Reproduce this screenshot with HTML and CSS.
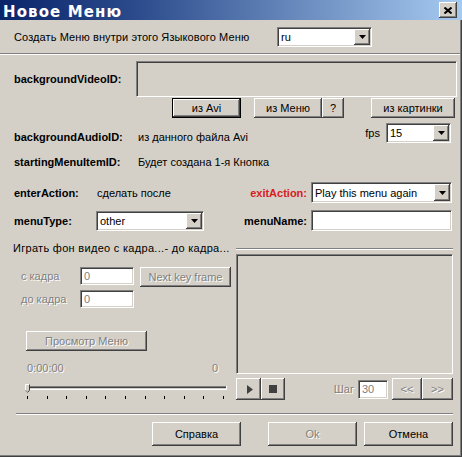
FILE: index.html
```html
<!DOCTYPE html>
<html lang="ru">
<head>
<meta charset="utf-8">
<title>Новое Меню</title>
<link rel="stylesheet" href="styles.css">
</head>
<body>
<div class="dialog">
  <div class="titlebar">
    <span class="title">Новое Меню</span>
    <div class="btn close"><svg width="8" height="7" viewBox="0 0 8 7"><path d="M0.5 0.5L7.5 6.5M7.5 0.5L0.5 6.5" stroke="#000" stroke-width="2" fill="none"/></svg></div>
  </div>

  <div class="row row-lang">
    <span class="lbl-lang">Создать Меню внутри этого Языкового Меню</span>
    <div class="field combo combo-lang"><span class="val">ru</span><span class="btn ddb"><svg width="7" height="4" viewBox="0 0 7 4"><path d="M0 0h7L3.5 4z" fill="#000"/></svg></span></div>
  </div>

  <div class="sep sep-full"></div>

  <div class="row row-video">
    <span class="b lbl-video">backgroundVideoID:</span>
    <div class="field ro video-box"></div>
  </div>

  <div class="row row-btns">
    <div class="btn default b-avi">из Avi</div>
    <div class="btn b-menu">из Меню</div>
    <div class="btn b-q">?</div>
    <div class="btn b-pic">из картинки</div>
  </div>

  <div class="row row-audio">
    <span class="b al lbl-w124">backgroundAudioID:</span>
    <span class="al">из данного файла Avi</span>
    <span class="spacer"></span>
    <span class="fps-lbl">fps</span>
    <div class="field combo combo-fps"><span class="val">15</span><span class="btn ddb"><svg width="7" height="4" viewBox="0 0 7 4"><path d="M0 0h7L3.5 4z" fill="#000"/></svg></span></div>
  </div>

  <div class="row row-start">
    <span class="b lbl-w124">startingMenuItemID:</span>
    <span>Будет создана 1-я Кнопка</span>
  </div>

  <div class="row row-enter">
    <span class="b lbl-enter">enterAction:</span>
    <span>сделать после</span>
    <span class="spacer"></span>
    <span class="b lbl-exit">exitAction:</span>
    <div class="field combo combo-exit"><span class="val">Play this menu again</span><span class="btn ddb"><svg width="7" height="4" viewBox="0 0 7 4"><path d="M0 0h7L3.5 4z" fill="#000"/></svg></span></div>
  </div>

  <div class="row row-type">
    <span class="b lbl-type">menuType:</span>
    <div class="field combo combo-type"><span class="val">other</span><span class="btn ddb"><svg width="7" height="4" viewBox="0 0 7 4"><path d="M0 0h7L3.5 4z" fill="#000"/></svg></span></div>
    <span class="spacer"></span>
    <span class="b lbl-name">menuName:</span>
    <div class="field input-name"></div>
  </div>

  <div class="group">
    <div class="gleft">
      <div class="ghead">Играть фон видео с кадра...- до кадра...</div>
      <div class="frame-row">
        <span class="frame-lbl dis">с кадра</span>
        <div class="field frame-in"><span class="in-val dis-val">0</span></div>
        <div class="btn dis b-next">Next key frame</div>
      </div>
      <div class="frame-row frame-row2">
        <span class="frame-lbl dis">до кадра</span>
        <div class="field frame-in"><span class="in-val dis-val">0</span></div>
      </div>
      <div class="btn dis b-preview">Просмотр Меню</div>
      <div class="time-row dis"><span>0:00:00</span><span>0</span></div>
      <svg class="slider" width="202" height="16" viewBox="0 0 202 16">
        <rect x="0" y="2" width="202" height="1" fill="#808080"/>
        <rect x="0" y="3" width="202" height="1" fill="#404040"/>
        <rect x="0" y="4" width="202" height="1" fill="#d4d0c8"/>
        <rect x="0" y="5" width="202" height="1" fill="#ffffff"/>
        <rect x="201" y="2" width="1" height="4" fill="#ffffff"/>
        <path d="M0 0h5v6l-2.5 3L0 6z" fill="#d4d0c8"/>
        <path d="M0.5 6V0.5H4.5" stroke="#ffffff" stroke-width="1" fill="none"/>
        <path d="M4.5 0.5V6.2L2.5 8.5" stroke="#404040" stroke-width="1" fill="none"/>
        <path d="M0.5 6.2L2.5 8.5" stroke="#808080" stroke-width="1" fill="none"/>
        <g fill="#000">
          <rect x="2" y="12" width="1" height="3"/>
          <rect x="22" y="12" width="1" height="3"/>
          <rect x="41" y="12" width="1" height="3"/>
          <rect x="61" y="12" width="1" height="3"/>
          <rect x="80" y="12" width="1" height="3"/>
          <rect x="100" y="12" width="1" height="3"/>
          <rect x="120" y="12" width="1" height="3"/>
          <rect x="139" y="12" width="1" height="3"/>
          <rect x="159" y="12" width="1" height="3"/>
          <rect x="178" y="12" width="1" height="3"/>
          <rect x="198" y="12" width="1" height="3"/>
        </g>
      </svg>
    </div>
    <div class="gright">
      <div class="sep gline"></div>
      <div class="panel"></div>
      <div class="ctl-row">
        <div class="btn b-play"><svg width="6" height="9" viewBox="0 0 6 9"><path d="M0 0L6 4.5L0 9z" fill="#404040"/></svg></div>
        <div class="btn b-stop"><svg width="8" height="8" viewBox="0 0 8 8"><rect width="8" height="8" fill="#404040"/></svg></div>
        <span class="spacer"></span>
        <span class="dis step-lbl">Шаг</span>
        <div class="field step-in"><span class="in-val dis-val">30</span></div>
        <div class="btn dis b-prev">&lt;&lt;</div>
        <div class="btn dis b-nextf">&gt;&gt;</div>
      </div>
    </div>
  </div>

  <div class="sep sep-bottom"></div>

  <div class="row row-bottom">
    <div class="btn b-help">Справка</div>
    <div class="btn dis b-ok">Ok</div>
    <div class="btn b-cancel">Отмена</div>
  </div>
</div>
</body>
</html>
```

FILE: styles.css
```css
html, body {
  margin: 0;
  padding: 0;
  background: #d4d0c8;
}

.dialog {
  width: 462px;
  height: 457px;
  background: #d4d0c8;
  box-shadow: inset -1px -1px #404040, inset -2px -2px #808080;
  font-family: "Liberation Sans", Arial, sans-serif;
  font-size: 11px;
  color: #000;
  overflow: hidden;
}

/* title bar */
.titlebar {
  height: 20px;
  box-sizing: border-box;
  padding: 0 5px 0 3px;
  background: linear-gradient(90deg, #0a246a 0%, #2c4c8c 30%, #a6caf0 100%);
  display: flex;
  align-items: center;
  justify-content: space-between;
}
.title {
  color: #fff;
  font-family: "DejaVu Sans", Verdana, sans-serif;
  font-weight: bold;
  font-size: 15px;
  letter-spacing: 1.1px;
  line-height: 18px;
  margin-top: 3px;
}
.close {
  width: 18px;
  height: 16px;
}

/* generic widgets */
.btn {
  box-sizing: border-box;
  display: flex;
  align-items: center;
  justify-content: center;
  background: #d4d0c8;
  box-shadow: inset -1px -1px #404040, inset 1px 1px #fff, inset -2px -2px #808080, inset 2px 2px #d4d0c8;
  white-space: nowrap;
}
.btn.default {
  border: 1px solid #000;
}
.dis {
  color: #808080;
  text-shadow: 1px 1px #fff;
}
.dis-val {
  color: #808080;
}
.b {
  font-weight: bold;
}
.field {
  box-sizing: border-box;
  border: 1px solid;
  border-color: #808080 #fff #fff #808080;
  box-shadow: inset 1px 1px #404040, inset -1px -1px #d4d0c8;
  background: #fff;
}
.field.ro {
  background: #d4d0c8;
}
.combo {
  display: flex;
  padding: 1px;
}
.combo .val {
  flex: 1;
  padding-left: 2px;
  display: flex;
  align-items: center;
  white-space: nowrap;
  overflow: hidden;
}
.ddb {
  width: 16px;
  height: 100%;
}
.in-val {
  display: flex;
  align-items: center;
  height: 100%;
  padding-left: 3px;
}
.spacer {
  flex: 1;
}
.sep {
  height: 0;
  border-top: 1px solid #808080;
  border-bottom: 1px solid #fff;
}

/* rows */
.row {
  display: flex;
  align-items: center;
}
.row-lang {
  margin-top: 7px;
  height: 20px;
  padding-left: 14px;
}
.lbl-lang {
  width: 263px;
  letter-spacing: 0.1px;
}
.combo-lang {
  width: 95px;
  height: 20px;
}
.sep-full {
  margin: 6px 2px 0 0;
}

.row-video {
  margin-top: 6px;
  height: 36px;
  padding-left: 14px;
}
.lbl-video {
  width: 122px;
}
.video-box {
  width: 321px;
  height: 36px;
}

.row-btns {
  margin-top: 1px;
  height: 20px;
  padding-left: 172px;
}
.b-avi { width: 69px; height: 20px; }
.b-menu { margin-left: 13px; width: 68px; height: 20px; }
.b-q { width: 22px; height: 20px; }
.b-pic { margin-left: 27px; width: 84px; height: 20px; }

.row-audio {
  margin-top: 5px;
  height: 21px;
  padding: 0 11px 0 14px;
  align-items: flex-start;
}
.lbl-w124 {
  width: 124px;
}
.al {
  margin-top: 7px;
  line-height: 14px;
}
.fps-lbl {
  margin-top: 3px;
  line-height: 14px;
  margin-right: 6px;
}
.combo-fps {
  width: 65px;
  height: 20px;
}

.row-start {
  margin-top: 11px;
  height: 14px;
  line-height: 14px;
  padding-left: 14px;
}

.row-enter {
  margin-top: 13px;
  height: 21px;
  padding: 0 10px 0 14px;
}
.lbl-enter {
  width: 83px;
}
.lbl-exit {
  color: #d82020;
  margin-right: 4px;
}
.combo-exit {
  width: 141px;
  height: 21px;
}

.row-type {
  margin-top: 7px;
  height: 21px;
  padding: 0 10px 0 14px;
}
.lbl-type {
  width: 82px;
}
.combo-type {
  width: 108px;
  height: 20px;
}
.lbl-name {
  margin-right: 4px;
}
.input-name {
  width: 141px;
  height: 21px;
}

/* group box */
.group {
  display: flex;
  margin-top: 10px;
}
.gleft {
  width: 236px;
}
.gright {
  width: 217px;
}
.ghead {
  line-height: 14px;
  padding-left: 13px;
  letter-spacing: 0.3px;
  white-space: nowrap;
}
.frame-row {
  display: flex;
  align-items: flex-start;
  margin-top: 12px;
  padding-left: 21px;
}
.frame-row2 {
  margin-top: 3px;
}
.frame-lbl {
  width: 59px;
  line-height: 18px;
}
.frame-in {
  width: 54px;
  height: 18px;
}
.b-next {
  margin-left: 6px;
  width: 91px;
  height: 20px;
}
.b-preview {
  margin: 23px 0 0 26px;
  width: 121px;
  height: 20px;
}
.time-row {
  display: flex;
  justify-content: space-between;
  margin: 10px 0 0 27px;
  width: 191px;
  line-height: 14px;
}
.slider {
  display: block;
  margin: 9px 0 0 25px;
}

.gline {
  margin-top: 7px;
}
.panel {
  margin-top: 4px;
  height: 120px;
  box-sizing: border-box;
  border: 1px solid;
  border-color: #808080 #fff #fff #808080;
  box-shadow: inset 1px 1px #404040, inset -1px -1px #d4d0c8;
}
.ctl-row {
  display: flex;
  align-items: center;
  margin-top: 4px;
  height: 22px;
}
.b-play { width: 25px; height: 22px; padding-left: 2px; }
.b-stop { width: 24px; height: 22px; }
.step-lbl { margin-right: 4px; }
.step-in { width: 30px; height: 19px; }
.b-prev { margin-left: 4px; width: 30px; height: 22px; }
.b-nextf { width: 31px; height: 22px; }

.sep-bottom {
  margin: 13px 0 0 16px;
  width: 437px;
}
.row-bottom {
  margin-top: 7px;
  height: 24px;
  padding-left: 152px;
}
.b-help { width: 89px; height: 24px; }
.b-ok { margin-left: 27px; width: 89px; height: 24px; }
.b-cancel { margin-left: 7px; width: 89px; height: 24px; }
```
